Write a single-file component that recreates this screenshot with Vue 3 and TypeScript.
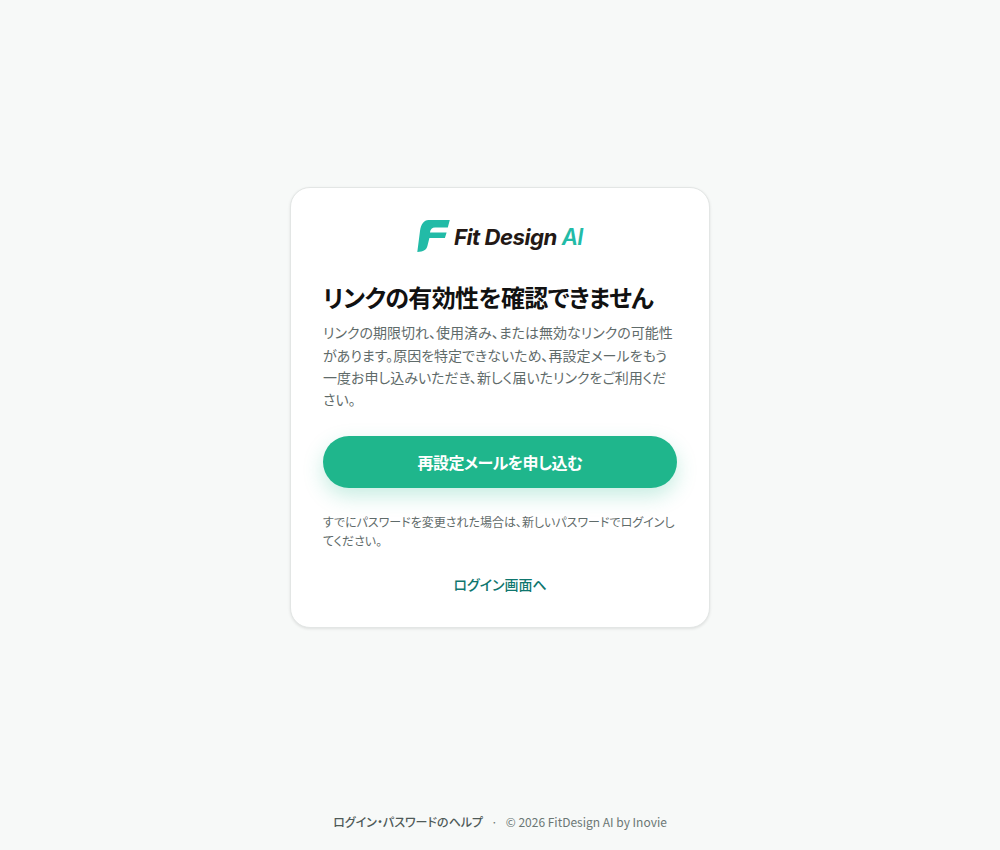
<script setup lang="ts">
const title = 'リンクの有効性を確認できません'
</script>

<template>
  <div class="page">
    <main class="main">
      <section class="card">
        <div class="logo">
          <svg class="mark" width="33" height="32" viewBox="0 0 33 32" aria-hidden="true">
            <path fill="#22BBA7" d="M11.5 0 H32.8 L30.8 7.6 H18 C15 7.6 13.6 9.5 12.9 12.4 H29.6 L27.9 18 H12.4 L10.4 26 C9.6 29.5 6.5 31.8 0.3 32 L3 11 C4 4 7 0 11.5 0 Z" />
          </svg>
          <span class="wordmark">Fit Design <em>AI</em></span>
        </div>
        <h1 class="title">{{ title }}</h1>
        <p class="desc">リンクの期限切れ、使用済み、または無効なリンクの可能性があります。原因を特定できないため、再設定メールをもう一度お申し込みいただき、新しく届いたリンクをご利用ください。</p>
        <button class="cta" type="button">再設定メールを申し込む</button>
        <p class="note">すでにパスワードを変更された場合は、新しいパスワードでログインしてください。</p>
        <a class="login" href="#">ログイン画面へ</a>
      </section>
    </main>
    <footer class="footer">
      <a class="help" href="#">ログイン・パスワードのヘルプ</a>
      <span class="dot">·</span>
      <span>© 2026 FitDesign AI by Inovie</span>
    </footer>
  </div>
</template>

<style>
html, body { margin: 0; background: #f7f9f8; }
</style>

<style scoped>
.page {
  height: 850px;
  display: flex;
  flex-direction: column;
  background: #f7f9f8;
  font-family: "Noto Sans CJK JP", "Noto Sans", sans-serif;
  font-feature-settings: "palt";
  overflow: hidden;
}
.main {
  flex: none;
  height: 795px;
  padding-top: 10px;
  display: flex;
  align-items: center;
  justify-content: center;
}
.card {
  box-sizing: border-box;
  width: 420px;
  padding: 32px;
  background: #fff;
  border: 1px solid #e3e6e5;
  border-radius: 20px;
  box-shadow: 0 1px 3px rgba(0, 0, 0, 0.1);
  display: flex;
  flex-direction: column;
}
.logo {
  display: flex;
  align-items: center;
  justify-content: center;
  gap: 4px;
  height: 32px;
  margin-bottom: 27px;
}
.mark { display: block; }
.wordmark {
  font-family: Inter, Lato, sans-serif;
  font-size: 22.2px;
  font-weight: 700;
  font-style: italic;
  color: #231815;
  letter-spacing: -0.5px;
  white-space: nowrap;
}
.wordmark em { color: #22bba7; font-style: italic; font-weight: 600; }
.title {
  margin: 0 0 6px;
  font-size: 24px;
  line-height: 36px;
  font-weight: 700;
  letter-spacing: -0.6px;
  color: #111;
}
.desc {
  margin: 0 0 24.9px;
  font-size: 14px;
  line-height: 22.4px;
  color: #5f6b6a;
}
.cta {
  height: 52px;
  border: 0;
  border-radius: 26px;
  background: #1fb68c;
  color: #fff;
  font: inherit;
  font-size: 16px;
  font-weight: 700;
  letter-spacing: -0.5px;
  box-shadow: 0 8px 20px rgba(31, 182, 140, 0.25);
}
.note {
  margin: 24px 0 0;
  font-size: 12px;
  line-height: 19px;
  color: #5f6b6a;
}
.login {
  margin-top: 23px;
  text-align: center;
  font-size: 14px;
  line-height: 22px;
  font-weight: 500;
  color: #0f766e;
  text-decoration: none;
}
.footer {
  flex: none;
  display: flex;
  justify-content: center;
  align-items: center;
  gap: 8px;
  height: 32px;
  font-size: 12px;
  color: #6b7775;
}
.help {
  color: #4f5a58;
  font-weight: 500;
  text-decoration: none;
}
</style>
